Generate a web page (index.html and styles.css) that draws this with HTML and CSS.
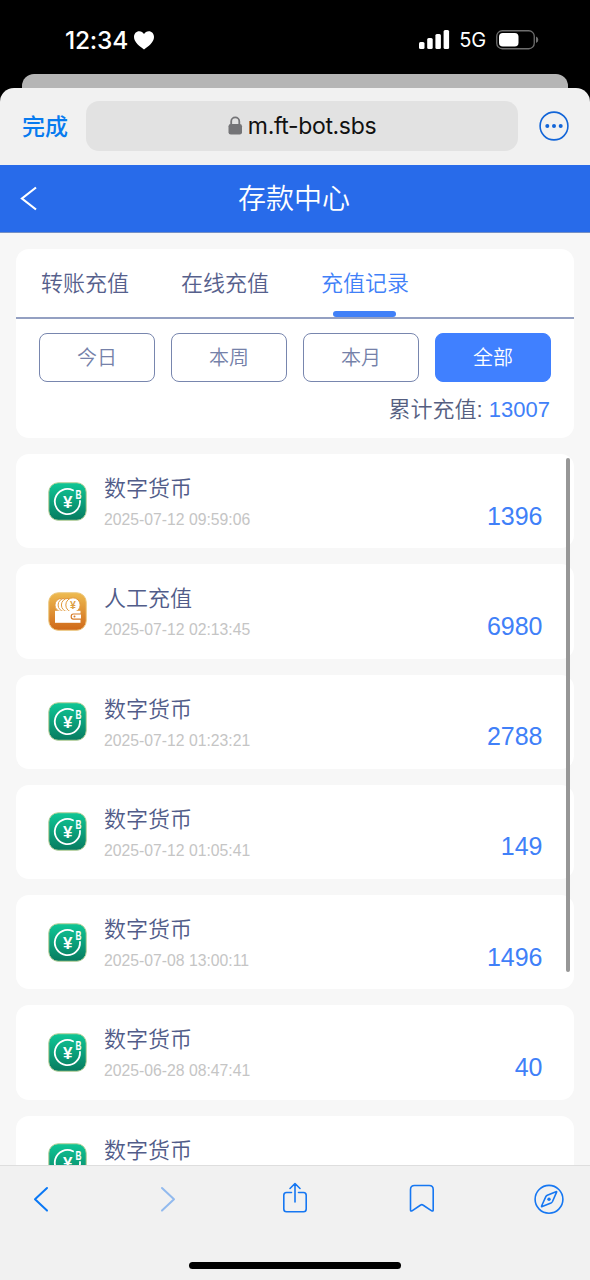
FILE: index.html
```html
<!DOCTYPE html>
<html lang="zh-CN">
<head>
<meta charset="utf-8">
<title>存款中心</title>
<link rel="stylesheet" href="styles.css">
</head>
<body>
<svg class="defs" width="0" height="0" aria-hidden="true">
  <defs>
    <linearGradient id="green" x1="0" y1="0" x2="0" y2="1"><stop offset="0" stop-color="#0fc796"/><stop offset="1" stop-color="#077b60"/></linearGradient>
    <linearGradient id="gold" x1="0" y1="0" x2="0" y2="1"><stop offset="0" stop-color="#eebb50"/><stop offset="1" stop-color="#cf6819"/></linearGradient>
    <symbol id="coin" viewBox="0 0 39 39">
      <rect x=".75" y=".75" width="37.5" height="37.5" rx="9.5" fill="url(#green)" stroke="#b9cf98" stroke-width="1"/>
      <path d="M25 8.300A12.600 12.600 0 1 0 32 18.800" fill="none" stroke="#fff" stroke-width="1.800" stroke-linecap="round"/>
      <text class="glyph" x="19.7" y="25.6" font-size="17" text-anchor="middle">¥</text>
      <text class="glyph" x="27.400" y="17" font-size="12.500" textLength="6" lengthAdjust="spacingAndGlyphs">B</text>
    </symbol>
    <symbol id="wallet" viewBox="0 0 39 39">
      <rect x=".75" y=".75" width="37.5" height="37.5" rx="9.5" fill="url(#gold)" stroke="#ecc77d" stroke-width="1"/>
      <g fill="#fff" stroke="#e29a3d" stroke-width="1">
        <circle cx="13.500" cy="13" r="6.600"/><circle cx="16.700" cy="13" r="6.600"/><circle cx="20" cy="13" r="6.600"/><circle cx="25" cy="13" r="7.200"/>
      </g>
      <text x="25" y="17" font-size="10.5" font-weight="700" text-anchor="middle" fill="#dda044" font-family="Liberation Sans">¥</text>
      <path d="M7 18.800H32.500V30.800H7Z" fill="#fff"/>
      <path d="M33 22H25.300Q23.200 22 23.200 24.600T25.300 27.200H33" fill="#fff" stroke="#d77c29" stroke-width="1.2"/>
      <circle cx="26.500" cy="24.600" r="1" fill="#d77c29"/>
    </symbol>
  </defs>
</svg>
<div class="phone">
  <div class="status">
    <div class="clock">12:34
      <svg width="20" height="19" viewBox="0 0 20 19"><path d="M10 18.4C6 15.4 0 11.4 0 5.9 0 2.500 2.300 .2 5.200 .2 7.300 .2 9 1.300 10 3 11 1.300 12.700 .2 14.800 .2 17.700 .2 20 2.500 20 5.900 20 11.400 14 15.400 10 18.400Z" fill="#fff"/></svg>
    </div>
    <div class="signals">
      <svg width="31" height="19" viewBox="0 0 31 19" fill="#fff"><rect x="0" y="12" width="5.500" height="7" rx="1.500"/><rect x="8.200" y="8" width="5.500" height="11" rx="1.500"/><rect x="16.400" y="4" width="5.500" height="15" rx="1.500"/><rect x="24.600" y="0" width="5.500" height="19" rx="1.500"/></svg>
      <span class="network">5G</span>
      <svg width="43" height="20" viewBox="0 0 43 20"><rect x=".75" y=".75" width="37.500" height="18" rx="5.500" fill="none" stroke="#6e6e6e" stroke-width="1.300"/><rect x="3" y="3" width="19.500" height="13.500" rx="3.800" fill="#fff"/><path d="M40 6.500Q42.300 7.500 42.300 9.800T40 13.100Z" fill="#6e6e6e"/></svg>
    </div>
  </div>
  <div class="back-sheet"></div>
  <div class="sheet">
    <div class="browser-bar">
      <span class="done">完成</span>
      <div class="address">
        <svg width="15" height="19" viewBox="0 0 15 19"><rect x=".5" y="8" width="13.500" height="10.500" rx="2.300" fill="#747477"/><path d="M3.200 9V5.500A4 4 0 0 1 11.300 5.500V9" fill="none" stroke="#747477" stroke-width="1.800"/></svg>
        <span>m.ft-bot.sbs</span>
      </div>
      <svg class="more" width="30" height="30" viewBox="0 0 30 30"><circle cx="15" cy="15" r="13.900" fill="none" stroke="#1265d8" stroke-width="1.600"/><g fill="#1265d8"><circle cx="8.300" cy="15" r="2"/><circle cx="15" cy="15" r="2"/><circle cx="21.700" cy="15" r="2"/></g></svg>
    </div>
    <div class="title-bar">
      <svg width="18" height="26" viewBox="0 0 18 26"><path d="M16 1.500L2 12.500L16 23.500" fill="none" stroke="#fff" stroke-width="2.200"/></svg>
      <h1>存款中心</h1>
    </div>
    <div class="content">
      <div class="panel">
        <div class="tabs"><span class="tab">转账充值</span><span class="tab">在线充值</span><span class="tab active">充值记录</span></div>
        <div class="filters"><span class="filter">今日</span><span class="filter">本周</span><span class="filter">本月</span><span class="filter selected">全部</span></div>
        <div class="total">累计充值: <b>13007</b></div>
      </div>
      <div class="records">
        <div class="record"><svg class="icon"><use href="#coin"/></svg><div class="info"><p>数字货币</p><time>2025-07-12 09:59:06</time></div><strong>1396</strong></div>
        <div class="record"><svg class="icon"><use href="#wallet"/></svg><div class="info"><p>人工充值</p><time>2025-07-12 02:13:45</time></div><strong>6980</strong></div>
        <div class="record"><svg class="icon"><use href="#coin"/></svg><div class="info"><p>数字货币</p><time>2025-07-12 01:23:21</time></div><strong>2788</strong></div>
        <div class="record"><svg class="icon"><use href="#coin"/></svg><div class="info"><p>数字货币</p><time>2025-07-12 01:05:41</time></div><strong>149</strong></div>
        <div class="record"><svg class="icon"><use href="#coin"/></svg><div class="info"><p>数字货币</p><time>2025-07-08 13:00:11</time></div><strong>1496</strong></div>
        <div class="record"><svg class="icon"><use href="#coin"/></svg><div class="info"><p>数字货币</p><time>2025-06-28 08:47:41</time></div><strong>40</strong></div>
        <div class="record"><svg class="icon"><use href="#coin"/></svg><div class="info"><p>数字货币</p></div></div>
        <div class="scrollbar"></div>
      </div>
    </div>
    <div class="bottom-bar">
      <div class="tools">
        <svg width="30" height="34" viewBox="0 0 30 34"><path d="M21 6L9 17.300L21 28.600" fill="none" stroke="#0a78f5" stroke-width="2" stroke-linecap="round" stroke-linejoin="round"/></svg>
        <svg width="30" height="34" viewBox="0 0 30 34"><path d="M9 6L21 17.300L9 28.600" fill="none" stroke="#92baee" stroke-width="2" stroke-linecap="round" stroke-linejoin="round"/></svg>
        <svg width="30" height="34" viewBox="0 0 30 34"><path d="M11.500 10.500H6.500Q3.800 10.500 3.800 13.200V27Q3.800 29.700 6.500 29.700H23.500Q26.200 29.700 26.200 27V13.200Q26.200 10.500 23.500 10.500H18.500M15 20V1.500M10 6.500L15 1.500L20 6.500" fill="none" stroke="#1677f2" stroke-width="1.600" stroke-linecap="round" stroke-linejoin="round"/></svg>
        <svg width="30" height="34" viewBox="0 0 30 34"><path d="M3.500 28V7.500Q3.500 3.500 7.500 3.500H22.200Q26.200 3.500 26.200 7.500V28Q26.200 29.500 24.700 28.800L15.900 23Q14.800 22.200 13.700 23L5 28.800Q3.500 29.500 3.500 28Z" fill="none" stroke="#1677f2" stroke-width="1.600" stroke-linejoin="round"/></svg>
        <svg width="30" height="34" viewBox="0 0 30 34"><g fill="none" stroke="#1677f2" stroke-width="1.600" stroke-linejoin="round"><circle cx="15" cy="17.300" r="13.900"/><path d="M22.600 10.100Q23 9.300 22 9.700L13.300 13.300Q12.200 13.800 11.700 14.800L7.600 24Q7.300 25 8.200 24.600L17 21Q18 20.500 18.500 19.500Z"/></g><circle cx="15" cy="17.300" r="1.700" fill="#1677f2"/></svg>
      </div>
      <div class="home"></div>
    </div>
  </div>
</div>
</body>
</html>
```

FILE: styles.css
```css
* { box-sizing: border-box; }
body { margin: 0; font-family: "Liberation Sans", "Noto Sans CJK SC", sans-serif; background: #000; }
svg { display: block; flex: none; }
h1, p { margin: 0; font-weight: 350; }
.defs { position: absolute; }
.phone { width: 590px; height: 1280px; overflow: hidden; display: flex; flex-direction: column; background: #000; }
.status { height: 74px; flex: none; display: flex; justify-content: space-between; padding: 27px 51px 0 65px; color: #fff; }
.clock { display: flex; align-items: center; gap: 6px; height: 27px; font: 550 24.500px/27px Inter, sans-serif; letter-spacing: -.2px; }
.signals { display: flex; align-items: center; height: 25px; }
.network { font: 400 20px/25px Inter, sans-serif; margin: 2px 10px 0 9px; letter-spacing: -.2px; }
.back-sheet { height: 14px; flex: none; margin: 0 22px; border-radius: 12px 12px 0 0; background: #b5b5b5; }
.sheet { flex: 1; min-height: 0; display: flex; flex-direction: column; background: #f1f1f1; border-radius: 14px 14px 0 0; overflow: hidden; }
.browser-bar { height: 77px; flex: none; display: flex; align-items: center; padding: 0 21px 2px 22px; }
.done { width: 64px; color: #087bef; font: 500 23px/32px "Noto Sans CJK SC", sans-serif; padding-bottom: 2px; }
.address { width: 432px; height: 50px; display: flex; align-items: center; justify-content: center; gap: 5px; border-radius: 13px; background: #e2e2e2; color: #111; font: 400 23px/50px Inter, sans-serif; letter-spacing: -.35px; }
.more { margin-left: 21px; }
.title-bar { height: 68px; flex: none; display: flex; align-items: center; padding: 0 40px 0 20px; background: #286bea; border-bottom: 1px solid #7590c4; color: #fff; }
.title-bar h1 { flex: 1; text-align: center; font: 350 28px/64px "Noto Sans CJK SC", sans-serif; padding-bottom: 3px; }
.content { flex: 1; min-height: 0; overflow: hidden; padding: 16px; background: #f7f7f7; }
.panel { height: 189px; border-radius: 13px; background: #fff; margin-bottom: 16px; color: #56608c; }
.tabs { height: 69.500px; display: flex; gap: 52px; padding-left: 25px; border-bottom: 2px solid #94a0c2; }
.tab { position: relative; font-size: 22px; line-height: 69px; font-weight: 350; }
.tab.active { color: #4080f8; }
.tab.active::after { content: ""; position: absolute; left: 12px; bottom: -.5px; width: 63px; height: 6px; border-radius: 3px; background: #4080f8; }
.filters { display: flex; gap: 16px; padding: 14.500px 23px 0; }
.filter { width: 116px; height: 49px; border: 1px solid #7886ae; border-radius: 8px; text-align: center; color: #7581a9; font-size: 20px; line-height: 48px; font-weight: 350; }
.filter.selected { border-color: #4080ff; background: #4080ff; color: #fff; }
.total { text-align: right; padding: 12px 24px 0 0; font-size: 22px; line-height: 32px; font-weight: 350; color: #555e80; }
.total b { font-weight: 400; color: #4080f8; }
.records { position: relative; display: flex; flex-direction: column; gap: 16px; }
.record { height: 94.300px; flex: none; display: flex; border-radius: 13px; background: #fff; padding: 0 31.500px 0 32px; }
.icon { width: 39px; height: 39px; margin-top: 27.500px; }
.glyph { fill: #fff; font-family: "Liberation Sans", sans-serif; font-weight: 700; }
.info { flex: 1; padding: 18px 0 0 17px; }
.info p { font-size: 22px; line-height: 34px; color: #515c89; }
.info time { display: block; font-size: 15.750px; line-height: 20px; margin-top: 4px; color: #c5c5c5; }
.record strong { font-size: 25px; font-weight: 400; line-height: 30px; margin-top: 46.500px; color: #4080f8; }
.scrollbar { position: absolute; right: 4px; top: 4px; width: 4px; height: 514px; border-radius: 2px; background: #979797; }
.bottom-bar { height: 115px; flex: none; border-top: 1px solid #dedede; background: #f1f1f1; }
.tools { display: flex; justify-content: space-between; padding: 16px 26px 0; }
.home { width: 212px; height: 7px; margin: 46px auto 0; border-radius: 4px; background: #000; }
```
